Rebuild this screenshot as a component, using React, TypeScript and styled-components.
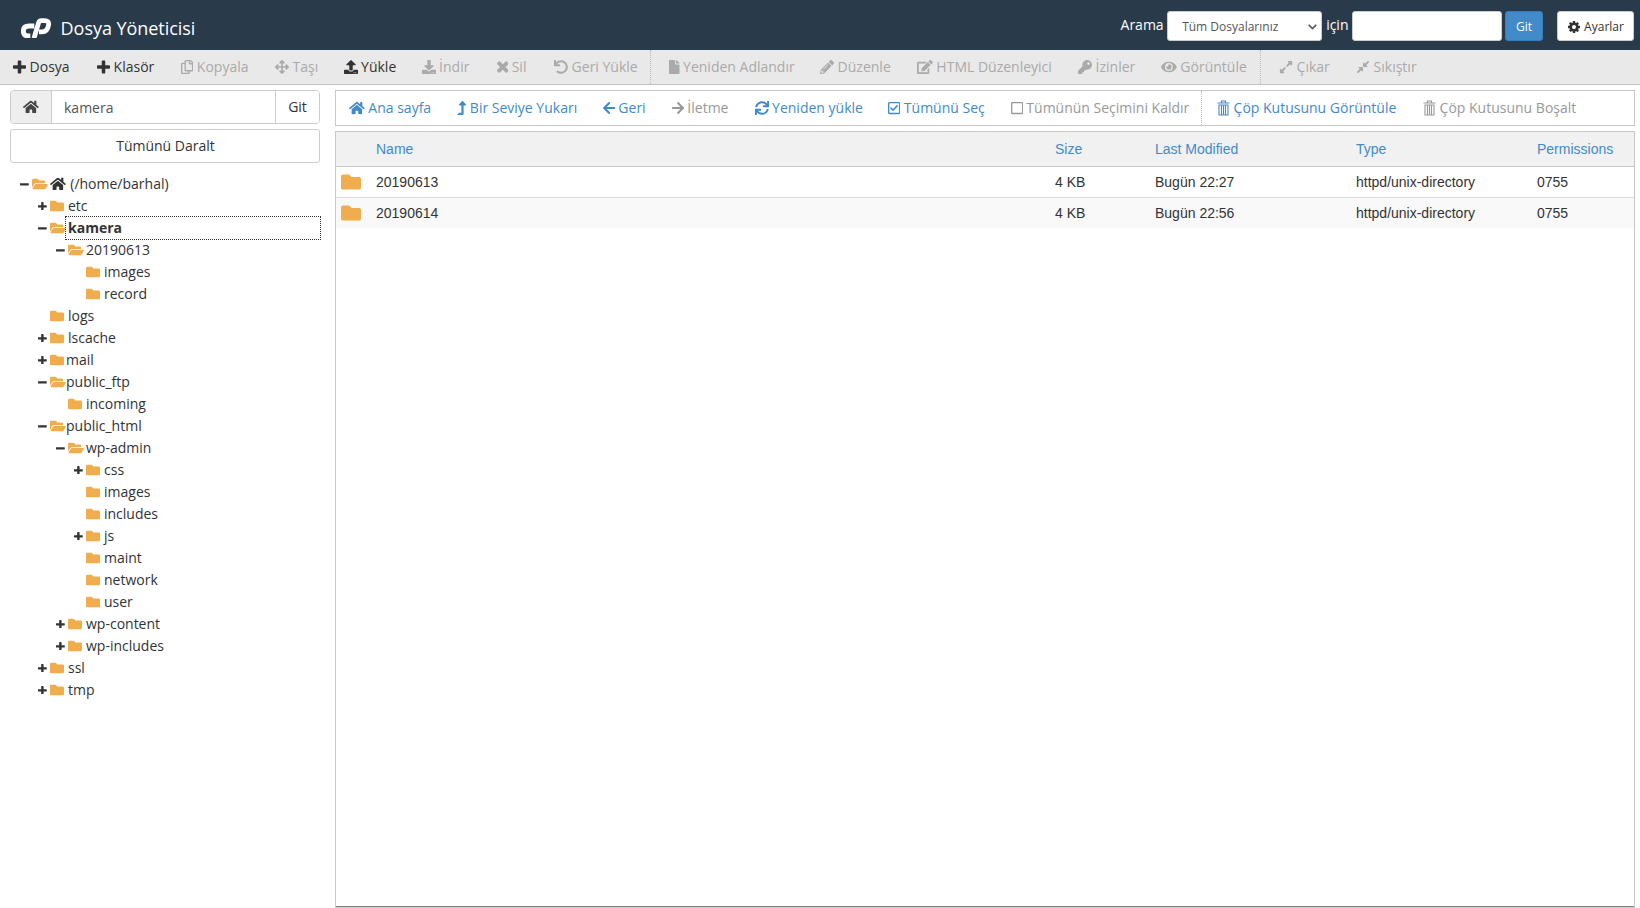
import React from 'react';
import styled, { createGlobalStyle } from 'styled-components';
import {
  FaHome, FaRegCopy, FaArrowsAlt, FaUpload, FaDownload, FaUndo, FaFile, FaPencilAlt, FaEdit, FaKey, FaEye,
  FaExpandAlt, FaCompressAlt, FaLevelUpAlt, FaArrowLeft, FaArrowRight, FaSync, FaRegCheckSquare, FaRegSquare,
  FaFolder, FaFolderOpen,
} from 'react-icons/fa';

const Global = createGlobalStyle`
  *, *::before, *::after { box-sizing: border-box; }
  body { margin: 0; background: #fff; color: #333; font: 14px/20px "Open Sans", sans-serif; overflow: hidden; }
  button, input { font: inherit; color: inherit; }
  svg { display: block; flex: none; }
`;

const solid = (d: string, box = '0 0 1792 1792') => () => (
  <svg viewBox={box} width="1em" height="1em" fill="currentColor"><path d={d} /></svg>
);

const Plus = solid('M1600 736v192q0 40-28 68t-68 28h-416v416q0 40-28 68t-68 28h-192q-40 0-68-28t-28-68v-416h-416q-40 0-68-28t-28-68v-192q0-40 28-68t68-28h416v-416q0-40 28-68t68-28h192q40 0 68 28t28 68v416h416q40 0 68 28t28 68z', '192 128 1408 1408');
const Minus = solid('M1600 736v192q0 40-28 68t-68 28h-1216q-40 0-68-28t-28-68v-192q0-40 28-68t68-28h1216q40 0 68 28t28 68z', '192 128 1408 1408');
const Times = solid('M1490 1322q0 40-28 68l-136 136q-28 28-68 28t-68-28l-294-294-294 294q-28 28-68 28t-68-28l-136-136q-28-28-28-68t28-68l294-294-294-294q-28-28-28-68t28-68l136-136q28-28 68-28t68 28l294 294 294-294q28-28 68-28t68 28l136 136q28 28 28 68t-28 68l-294 294 294 294q28 28 28 68z', '302 344 1188 1232');
const Cog = solid('M1152 896q0-106-75-181t-181-75-181 75-75 181 75 181 181 75 181-75 75-181zm512-109v222q0 12-8 23t-20 13l-185 28q-19 54-39 91 35 50 107 138 10 12 10 25t-9 23q-27 37-99 108t-94 71q-12 0-26-9l-138-108q-44 23-91 38-16 136-29 186-7 28-36 28h-222q-14 0-24.5-8.5t-11.5-21.5l-28-184q-49-16-90-37l-141 107q-10 9-25 9-14 0-25-11-126-114-165-168-7-10-7-23 0-12 8-23 15-21 51-66.5t54-70.5q-27-50-41-99l-183-27q-13-2-21-12.5t-8-23.5v-222q0-12 8-23t19-13l186-28q14-46 39-92-40-57-107-138-10-12-10-24 0-10 9-23 26-36 98.5-107.5t94.5-71.5q13 0 26 10l138 107q44-23 91-38 16-136 29-186 7-28 36-28h222q14 0 24.5 8.5t11.5 21.5l28 184q49 16 90 37l142-107q9-9 24-9 13 0 25 10 129 119 165 170 7 8 7 22 0 12-8 23-15 21-51 66.5t-54 70.5q26 50 41 98l183 28q13 2 21 12.5t8 23.5z');

const Trash = () => (
  <svg viewBox="0 0 13 16" width="13" height="16" fill="none" stroke="currentColor">
    <path d="M4.5 2.5V1h4v1.5M.5 3h12" strokeWidth="1.2" />
    <path d="M2 5v10h9V5zM4.5 5v10M6.5 5v10M8.5 5v10" strokeWidth="1.1" />
  </svg>
);

const Logo = () => (
  <svg viewBox="62 53 92 62" width="30.6" height="20.6" fill="none" stroke="#fff" strokeWidth="14.5">
    <path d="M102 77H86Q69 77 69 92Q69 107 83 107H90" />
    <path d="M101 114L115 67Q117 61 123 61H133Q147 61 145 74Q142 95 125 95H116" />
  </svg>
);

const Header = styled.header`
  height: 50px; background: #293a4a; color: #fff; display: flex; align-items: flex-start;
  padding: 11px 6px 0 21px;
`;
const Brand = styled.h1`
  margin: 0 auto 0 0; display: flex; align-items: center; gap: 9px;
  font-size: 18px; line-height: 24px; font-weight: 400; padding-top: 5px; letter-spacing: -0.05px;
`;
const SearchForm = styled.div`display: flex; align-items: flex-start;`;
const SearchWord = styled.label`line-height: 20px; padding-top: 4px; margin-right: 3.5px;`;
const Select = styled.div`
  width: 155px; height: 30px; margin-right: 4px; padding: 0 4px 0 14px; border: 1px solid #ccc; border-radius: 3px;
  background: #fff; color: #555; font-size: 12px; display: flex; align-items: center; justify-content: space-between;
  padding-top: 2px;
`;
const SearchInput = styled.input`
  width: 150px; height: 30px; border: 1px solid #ccc; border-radius: 3px; background: #fff; margin-right: 3px;
`;
const SmallButton = styled.button<{ $primary?: boolean }>`
  height: 30px; width: ${p => (p.$primary ? 38 : 77)}px; padding: 2px 0 0; font-size: 12px; border-radius: 3px;
  display: flex; align-items: center; justify-content: center; gap: 3px;
  margin-right: ${p => (p.$primary ? 14 : 0)}px;
  background: ${p => (p.$primary ? '#428bca' : '#fff')};
  color: ${p => (p.$primary ? '#fff' : '#333')};
  border: 1px solid ${p => (p.$primary ? '#357ebd' : '#ccc')};
  svg { font-size: 14px; margin-top: -1px; }
`;

const Bar = styled.nav<{ $light?: boolean }>`
  display: flex; white-space: nowrap;
  height: ${p => (p.$light ? 36 : 35)}px;
  background: ${p => (p.$light ? '#fff' : '#e9e9e9')};
  border: ${p => (p.$light ? '1px' : '0')} solid #c8c8c8;
  border-bottom: 1px solid ${p => (p.$light ? '#c8c8c8' : '#c1c5c8')};
`;
const Group = styled.div<{ $pad?: number }>`
  display: flex; padding-left: ${p => p.$pad ?? 0}px;
  & + & { border-left: 1px dotted #bbb; }
`;
const Action = styled.a<{ $tone: string; $iw: number; $w: number }>`
  display: flex; align-items: center; flex: none; color: ${p => p.$tone};
  width: ${p => p.$w}px;
  i { display: flex; width: ${p => p.$iw}px; margin-right: 3.6px; flex: none; }
  i svg { width: ${p => p.$iw}px; }
`;

const Page = styled.main`display: flex; align-items: stretch; height: 823px; padding: 5px 5px 0 10px;`;
const Side = styled.aside`width: 311px; margin-right: 14px;`;
const PathBox = styled.div`
  display: flex; width: 310px; height: 34px; border: 1px solid #ccc; border-radius: 4px; overflow: hidden; margin-bottom: 5px;
`;
const HomeAddon = styled.span`
  width: 41px; background: #eee; border-right: 1px solid #ccc; color: #444; display: flex; align-items: center;
  justify-content: center; font-size: 15.75px;
`;
const PathInput = styled.input`flex: 1; min-width: 0; border: 0; outline: 0; padding: 2px 12px 0; color: #555;`;
const GoButton = styled.button`width: 44px; padding: 0; border: 0; border-left: 1px solid #ccc; background: #fff;`;
const Collapse = styled.button`
  display: block; width: 310px; height: 34px; border: 1px solid #ccc; border-radius: 3px; background: #fff; padding: 0 0 0 1px;
`;
const Tree = styled.ul`list-style: none; margin: 10px 0 0; padding: 0;`;
const Node = styled.li<{ $level: number }>`
  display: flex; align-items: center; height: 22px; padding-left: ${p => 10 + p.$level * 18}px;
`;
const Toggle = styled.span`width: 12px; font-size: 8.75px; display: flex;`;
const FolderIcon = styled.span<{ $open: boolean }>`
  width: 15px; color: #f0ad4e; font-size: 14px; display: flex;
  svg { width: ${p => (p.$open ? 15.75 : 14)}px; }
`;
const Label = styled.span<{ $on?: boolean; $tight?: boolean }>`
  display: flex; align-items: center; gap: 4px; height: 24px; margin: -1px 0;
  padding-left: ${p => (p.$tight ? 0 : 2)}px; border: 1px dotted transparent;
  ${p => p.$on && 'flex: 1; border-color: #333; font-weight: 700;'}
  svg { font-size: 15.75px; margin-right: 0.5px; }
`;

const Content = styled.section`flex: 1; min-width: 0; display: flex; flex-direction: column; gap: 5px;`;
const Listing = styled.div`
  flex: 1; border: 1px solid #c8c8c8; border-bottom: 1px solid #ccc;
  display: flex; flex-direction: column; font-family: "Liberation Sans", Arial, sans-serif;
  &::after { content: ''; margin-top: auto; height: 1px; background: #808080; }
`;
const Line = styled.div<{ $head?: boolean; $alt?: boolean }>`
  display: grid; grid-template-columns: 40px 679px 100px 201px 181px 1fr; align-items: center;
  height: ${p => (p.$head ? 35 : p.$alt ? 30 : 31)}px;
  background: ${p => (p.$head ? '#f1f1f1' : p.$alt ? '#f9f9f9' : '#fff')};
  color: ${p => (p.$head ? '#428bca' : '#333')};
  border-bottom: ${p => (p.$alt ? 0 : 1)}px solid ${p => (p.$head ? '#c8c8c8' : '#ddd')};
`;
const BigFolder = styled.span`color: #f0ad4e; font-size: 20px; padding-left: 5px; display: flex;`;

type Item = [React.ComponentType, string, number, number, number?];
// icon, caption, icon width, distance to the next item, state (1 when enabled)
const main: Item[][] = [
  [[Plus, 'Dosya', 13, 84, 1], [Plus, 'Klasör', 13, 84, 1], [FaRegCopy, 'Kopyala', 12.25, 94], [FaArrowsAlt, 'Taşı', 14, 68.5],
    [FaUpload, 'Yükle', 14, 78, 1], [FaDownload, 'İndir', 14, 75], [Times, 'Sil', 11.6, 57.5], [FaUndo, 'Geri Yükle', 14, 96]],
  [[FaFile, 'Yeniden Adlandır', 10.5, 151], [FaPencilAlt, 'Düzenle', 14, 97], [FaEdit, 'HTML Düzenleyici', 15.75, 161],
    [FaKey, 'İzinler', 14, 83], [FaEye, 'Görüntüle', 15.75, 99]],
  [[FaExpandAlt, 'Çıkar', 14, 77], [FaCompressAlt, 'Sıkıştır', 14, 80]],
];
const nav: Item[][] = [
  [[FaHome, 'Ana sayfa', 15.75, 108, 1], [FaLevelUpAlt, 'Bir Seviye Yukarı', 9.25, 145.5, 1], [FaArrowLeft, 'Geri', 12.25, 69, 1],
    [FaArrowRight, 'İletme', 12.25, 83], [FaSync, 'Yeniden yükle', 14, 133.5, 1], [FaRegCheckSquare, 'Tümünü Seç', 12.25, 122.5, 1],
    [FaRegSquare, 'Tümünün Seçimini Kaldır', 12.25, 190.5]],
  [[Trash, 'Çöp Kutusunu Görüntüle', 13, 206, 1], [Trash, 'Çöp Kutusunu Boşalt', 13, 170]],
];

const Toolbar = ({ groups, pads, on, off, light }: { groups: Item[][]; pads: number[]; on: string; off: string; light?: boolean }) => (
  <Bar $light={light}>
    {groups.map((g, i) => (
      <Group key={i} $pad={pads[i]}>
        {g.map(([Icon, text, iw, w, state]) => (
          <Action key={text} $tone={state ? on : off} $iw={iw} $w={w}><i><Icon /></i>{text}</Action>
        ))}
      </Group>
    ))}
  </Bar>
);

// level, toggle, open folder, name
const tree: [number, '+' | '-' | '', boolean, string][] = [
  [1, '+', false, 'etc'], [1, '-', true, 'kamera'], [2, '-', true, '20190613'], [3, '', false, 'images'], [3, '', false, 'record'],
  [1, '', false, 'logs'], [1, '+', false, 'lscache'], [1, '+', false, 'mail'], [1, '-', true, 'public_ftp'], [2, '', false, 'incoming'],
  [1, '-', true, 'public_html'], [2, '-', true, 'wp-admin'], [3, '+', false, 'css'], [3, '', false, 'images'], [3, '', false, 'includes'],
  [3, '+', false, 'js'], [3, '', false, 'maint'], [3, '', false, 'network'], [3, '', false, 'user'], [2, '+', false, 'wp-content'],
  [2, '+', false, 'wp-includes'], [1, '+', false, 'ssl'], [1, '+', false, 'tmp'],
];
const tight = ['mail', 'public_ftp', 'public_html'];

export default function App() {
  return (
    <>
      <Global />
      <Header>
        <Brand><Logo />Dosya Yöneticisi</Brand>
        <SearchForm>
          <SearchWord>Arama</SearchWord>
          <Select>
            Tüm Dosyalarınız
            <svg width="9" height="6" viewBox="0 0 9 6" fill="none" stroke="#555" strokeWidth="1.6"><path d="M.7.8l3.8 3.8L8.3.8" /></svg>
          </Select>
          <SearchWord>için</SearchWord>
          <SearchInput />
          <SmallButton $primary>Git</SmallButton>
          <SmallButton><Cog />Ayarlar</SmallButton>
        </SearchForm>
      </Header>
      <Toolbar groups={main} pads={[13, 18, 18]} on="#333" off="#aaa" />
      <Page>
        <Side>
          <PathBox>
            <HomeAddon><FaHome /></HomeAddon>
            <PathInput defaultValue="kamera" />
            <GoButton>Git</GoButton>
          </PathBox>
          <Collapse>Tümünü Daralt</Collapse>
          <Tree>
            <Node $level={0}>
              <Toggle><Minus /></Toggle>
              <FolderIcon $open><FaFolderOpen /></FolderIcon>
              <Label><FaHome />(/home/barhal)</Label>
            </Node>
            {tree.map(([level, toggle, open, name], i) => (
              <Node key={i} $level={level}>
                <Toggle>{toggle === '+' ? <Plus /> : toggle === '-' ? <Minus /> : null}</Toggle>
                <FolderIcon $open={open}>{open ? <FaFolderOpen /> : <FaFolder />}</FolderIcon>
                <Label $on={name === 'kamera'} $tight={tight.includes(name)}>{name}</Label>
              </Node>
            ))}
          </Tree>
        </Side>
        <Content>
          <Toolbar groups={nav} pads={[13, 15]} on="#428bca" off="#999" light />
          <Listing>
            <Line $head><span /><span>Name</span><span>Size</span><span>Last Modified</span><span>Type</span><span>Permissions</span></Line>
            {[['20190613', '22:27'], ['20190614', '22:56']].map(([name, time], i) => (
              <Line key={name} $alt={i === 1}>
                <BigFolder><FaFolder /></BigFolder><span>{name}</span><span>4 KB</span><span>Bugün {time}</span>
                <span>httpd/unix-directory</span><span>0755</span>
              </Line>
            ))}
          </Listing>
        </Content>
      </Page>
    </>
  );
}
